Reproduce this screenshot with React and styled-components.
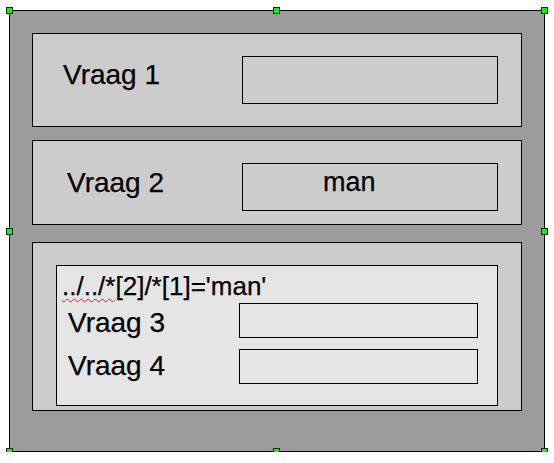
import React from 'react'
import styled, { createGlobalStyle } from 'styled-components'

const GlobalStyle = createGlobalStyle`
  html, body {
    margin: 0;
    padding: 0;
    background: #ffffff;
  }
  body {
    font-family: "Liberation Sans", Arial, sans-serif;
    color: #000;
    -webkit-text-stroke: 0.25px #000;
  }
`

const Frame = styled.div`
  position: relative;
  box-sizing: border-box;
  width: 536px;
  height: 442px;
  margin: 10px 0 0 9px;
  background: #9c9c9c;
  border: 1px solid #000;
  display: flex;
  flex-direction: column;
  padding: 22px 0 0 22px;
`

const Handle = styled.span`
  position: absolute;
  width: 7px;
  height: 7px;
  box-sizing: border-box;
  background: #22e622;
  border: 1px solid #103010;
  left: ${p => (p.x === 'left' ? '-4px' : p.x === 'mid' ? 'calc(50% - 4px)' : 'auto')};
  right: ${p => (p.x === 'right' ? '-4px' : 'auto')};
  top: ${p => (p.y === 'top' ? '-4px' : p.y === 'mid' ? 'calc(50% - 3px)' : 'auto')};
  bottom: ${p => (p.y === 'bottom' ? '-4px' : 'auto')};
`

const Panel = styled.section`
  box-sizing: border-box;
  width: 490px;
  height: ${p => p.h}px;
  margin-top: ${p => p.gap || 0}px;
  background: #cccccc;
  border: 1px solid #000;
  display: flex;
  flex-direction: column;
`

const Row = styled.div`
  display: flex;
  align-items: flex-start;
  padding-top: ${p => p.top}px;
`

const Label = styled.div`
  box-sizing: border-box;
  flex: 0 0 ${p => p.w}px;
  padding-left: ${p => p.indent}px;
  margin-top: ${p => p.drop}px;
  font-size: 28px;
  line-height: 28px;
  white-space: nowrap;
`

const Field = styled.div`
  box-sizing: border-box;
  width: ${p => p.w}px;
  height: ${p => p.h}px;
  border: 1px solid #000;
  background: transparent;
  font-size: 27px;
  line-height: 27px;
  padding: 5px 0 0 80px;
`

const Group = styled.div`
  box-sizing: border-box;
  width: 442px;
  height: 141px;
  margin: 22px 0 0 23px;
  background: #e5e5e5;
  border: 1px solid #000;
  display: flex;
  flex-direction: column;
`

const Condition = styled.div`
  font-size: 26px;
  line-height: 26px;
  padding: 7px 0 0 5px;
  white-space: nowrap;
`

const Misspelled = styled.span`
  text-decoration: underline wavy #e02020;
  text-decoration-thickness: 1px;
  text-underline-offset: 3px;
`

export default function App() {
  return (
    <>
      <GlobalStyle />
      <Frame>
        <Handle x="left" y="top" />
        <Handle x="mid" y="top" />
        <Handle x="right" y="top" />
        <Handle x="left" y="mid" />
        <Handle x="right" y="mid" />
        <Handle x="left" y="bottom" />
        <Handle x="mid" y="bottom" />
        <Handle x="right" y="bottom" />

        <Panel h={94}>
          <Row top={22}>
            <Label w={209} indent={30} drop={5}>Vraag 1</Label>
            <Field w={256} h={48} />
          </Row>
        </Panel>

        <Panel h={85} gap={13}>
          <Row top={22}>
            <Label w={209} indent={34} drop={6}>Vraag 2</Label>
            <Field w={256} h={48}>man</Field>
          </Row>
        </Panel>

        <Panel h={169} gap={17}>
          <Group>
            <Condition>
              <Misspelled>../../*</Misspelled>[2]/*[1]='man'
            </Condition>
            <Row top={4}>
              <Label w={182} indent={11} drop={6}>Vraag 3</Label>
              <Field w={239} h={35} />
            </Row>
            <Row top={11}>
              <Label w={182} indent={11} drop={3}>Vraag 4</Label>
              <Field w={239} h={35} />
            </Row>
          </Group>
        </Panel>
      </Frame>
    </>
  )
}
